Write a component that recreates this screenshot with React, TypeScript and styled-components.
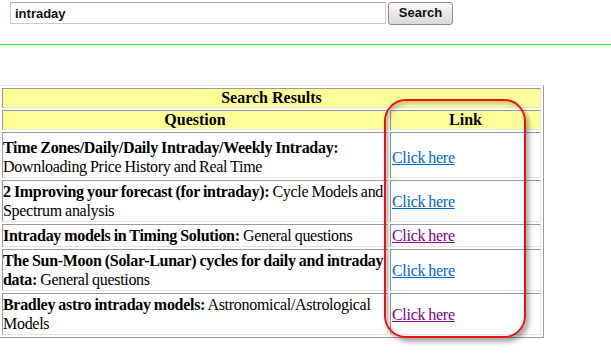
import React from 'react';
import { createGlobalStyle, styled } from 'styled-components';

const GlobalStyle = createGlobalStyle`
  html, body {
    margin: 0;
    padding: 0;
    background: #fff;
  }
  body {
    font-family: "Liberation Serif", "Times New Roman", serif;
    font-size: 16px;
    color: #000;
  }
`;

const Page = styled.div`
  position: relative;
  width: 611px;
  height: 354px;
  overflow: hidden;
`;

const SearchBar = styled.form`
  display: flex;
  align-items: center;
  gap: 2px;
  padding: 1px 0 0 10px;
  height: 24px;
`;

const SearchInput = styled.input`
  box-sizing: border-box;
  width: 376px;
  height: 22px;
  margin: 0;
  padding: 1px 4px 0;
  border: 1px solid #c9c9c9;
  border-top-color: #aaa;
  font-family: "Liberation Sans", Arial, sans-serif;
  font-size: 13px;
  font-weight: bold;
  color: #111;
  outline: none;
`;

const SearchButton = styled.button`
  box-sizing: border-box;
  width: 65px;
  height: 23px;
  margin: 0;
  padding: 0 0 1px;
  border: 1px solid #8c8c8c;
  border-radius: 3px;
  background: linear-gradient(#fafafa, #e8e8e8 50%, #d9d9d9);
  font-family: "Liberation Sans", Arial, sans-serif;
  font-size: 13px;
  font-weight: bold;
  color: #111;
`;

const Divider = styled.hr`
  margin: 19px 0 0;
  border: 0;
  height: 1px;
  background: #22ff22;
`;

const ResultsTable = styled.table`
  margin: 40px 0 0 -1px;
  width: 545px;
  border-collapse: separate;
  border-spacing: 2px;
  border: 1px solid;
  border-color: #e4e4e4 #9a9a9a #9a9a9a #e4e4e4;
`;

const HeadCell = styled.th`
  background: #ffff99;
  border: 1px solid;
  border-color: #9a9a9a #e4e4e4 #e4e4e4 #9a9a9a;
  padding: 1px;
  height: 16px;
  line-height: 16px;
  font-weight: bold;
  text-align: center;
`;

const Cell = styled.td<{ $top?: number }>`
  border: 1px solid;
  border-color: #9a9a9a #e4e4e4 #e4e4e4 #9a9a9a;
  padding: ${({ $top }) => $top ?? 1}px 1px 1px 0;
  line-height: 19px;
  letter-spacing: -0.3px;
  word-spacing: -0.5px;
  vertical-align: middle;
`;

const LinkCell = styled(Cell)`
  width: 147px;
  padding-left: 1px;
`;

const ResultLink = styled.a<{ $visited?: boolean }>`
  color: ${({ $visited }) => ($visited ? '#800080' : '#0066cc')};
  text-decoration: underline;
`;

const Highlight = styled.div`
  position: absolute;
  left: 384px;
  top: 99px;
  width: 142px;
  height: 239px;
  box-sizing: border-box;
  border: 2px solid #ee1111;
  border-radius: 22px;
  box-shadow: 3px 4px 5px rgba(0, 0, 0, 0.35), inset 3px 3px 4px rgba(0, 0, 0, 0.22);
  pointer-events: none;
`;

const results = [
  { title: 'Time Zones/Daily/Daily Intraday/Weekly Intraday:', topic: 'Downloading Price History and Real Time', visited: false, top: 5 },
  { title: '2 Improving your forecast (for intraday):', topic: 'Cycle Models and Spectrum analysis', visited: false, top: 1 },
  { title: 'Intraday models in Timing Solution:', topic: 'General questions', visited: true, top: 1 },
  { title: 'The Sun-Moon (Solar-Lunar) cycles for daily and intraday data:', topic: 'General questions', visited: false, top: 1 },
  { title: 'Bradley astro intraday models:', topic: 'Astronomical/Astrological Models', visited: true, top: 1 },
];

export default function App() {
  return (
    <Page>
      <GlobalStyle />
      <SearchBar onSubmit={(e) => e.preventDefault()}>
        <SearchInput defaultValue="intraday" />
        <SearchButton type="submit">Search</SearchButton>
      </SearchBar>
      <Divider />
      <ResultsTable>
        <thead>
          <tr>
            <HeadCell colSpan={2}>Search Results</HeadCell>
          </tr>
          <tr>
            <HeadCell>Question</HeadCell>
            <HeadCell>Link</HeadCell>
          </tr>
        </thead>
        <tbody>
          {results.map((r) => (
            <tr key={r.title}>
              <Cell $top={r.top}>
                <b>{r.title}</b> {r.topic}
              </Cell>
              <LinkCell $top={r.top}>
                <ResultLink href="#" $visited={r.visited}>Click here</ResultLink>
              </LinkCell>
            </tr>
          ))}
        </tbody>
      </ResultsTable>
      <Highlight />
    </Page>
  );
}
